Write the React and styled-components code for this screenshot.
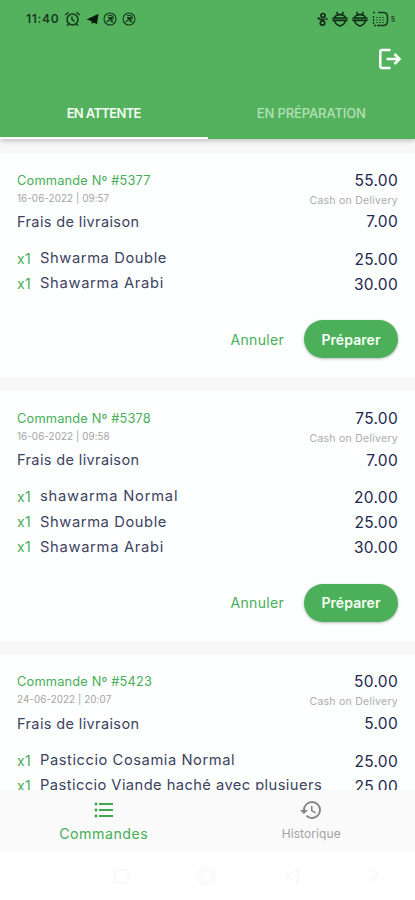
import React, { useState } from 'react'
import styled, { createGlobalStyle } from 'styled-components'
import { MdFormatListBulleted, MdHistory } from 'react-icons/md'

const GlobalStyle = createGlobalStyle`
    * {
        box-sizing: border-box;
    }
    body {
        margin: 0;
        font-family: Inter, 'Open Sans', sans-serif;
        background-color: #fff;
    }
    button {
        font-family: inherit;
        border: none;
        background: none;
        padding: 0;
    }
`;
const Container = styled.div`
    width: 415px;
    height: 900px;
    display: flex;
    flex-direction: column;
    overflow: hidden;
    background-color: #f8f8f8;
`;
const Header = styled.header`
    position: relative;
    height: 139px;
    flex: none;
    display: flex;
    flex-direction: column;
    background-color: #54b25f;
    box-shadow: 0 2px 5px rgba(0, 0, 0, 0.22);
`;
const StatusBar = styled.div`
    height: 38px;
    padding: 0 20px 0 26px;
    display: flex;
    align-items: center;
    justify-content: space-between;
    color: #17391d;
`;
const StatusGroup = styled.div`
    display: flex;
    align-items: center;
    gap: ${props => props.$gap};
`;
const Time = styled.span`
    font-size: 12px;
    font-weight: 600;
    line-height: 16px;
    letter-spacing: 0.7px;
`;
const TopBar = styled.div`
    height: 42px;
    padding: 0 13px;
    display: flex;
    align-items: center;
    justify-content: flex-end;
    color: #fff;
`;
const Tabs = styled.div`
    flex: 1;
    display: flex;
`;
const Tab = styled.button`
    flex: 1;
    padding-top: 8px;
    font-size: 13px;
    font-weight: ${props => (props.$active ? 600 : 500)};
    letter-spacing: ${props => (props.$active ? '-0.65px' : '-0.12px')};
    color: ${props => (props.$active ? '#f2fbf2' : '#b4e0b5')};
    border-bottom: 2px solid ${props => (props.$active ? '#fff' : 'transparent')};
`;
const Orders = styled.main`
    flex: 1;
    min-height: 0;
    overflow: hidden;
    padding-top: 14px;
    display: flex;
    flex-direction: column;
    gap: 14px;
`;
const Card = styled.section`
    flex: none;
    padding: 17px 17px 19px;
    background-color: #fdfefe;
`;
const Row = styled.div`
    display: flex;
    justify-content: space-between;
    align-items: center;
    height: ${props => props.$height};
`;
const OrderNumber = styled.span`
    font-size: 12.8px;
    letter-spacing: 0.18px;
    color: #48ae58;
`;
const OrderDate = styled.span`
    font-size: 9.8px;
    letter-spacing: 0.1px;
    position: relative;
    top: -2px;
    color: #a4a4a4;
`;
const Payment = styled.span`
    font-size: 10.5px;
    letter-spacing: 0.26px;
    color: #acacac;
`;
const Label = styled.span`
    font-size: 14.5px;
    line-height: 20px;
    letter-spacing: 0.38px;
    color: #3c4360;
`;
const Price = styled.span`
    font-size: 15.5px;
    letter-spacing: 0.3px;
    position: relative;
    top: ${props => props.$top || '0px'};
    color: #20284f;
`;
const Items = styled.div`
    padding-top: 12px;
`;
const Item = styled.div`
    display: flex;
    align-items: center;
    height: 25.2px;
    white-space: nowrap;
`;
const Quantity = styled.span`
    width: 23px;
    font-size: 14px;
    letter-spacing: 0.3px;
    color: #48ae58;
`;
const ItemName = styled(Label)`
    flex: 1;
    font-size: 14.7px;
    letter-spacing: ${props => props.$spacing};
`;
const Actions = styled.div`
    margin-top: 24.5px;
    display: flex;
    justify-content: flex-end;
    align-items: center;
    gap: 20px;
`;
const CancelButton = styled.button`
    font-size: 14px;
    letter-spacing: 0.3px;
    color: #48ae58;
`;
const PrepareButton = styled.button`
    width: 94px;
    height: 38px;
    border-radius: 19px;
    background-color: #4caf5a;
    color: #f7fff7;
    font-size: 14px;
    font-weight: 600;
    letter-spacing: 0.08px;
    box-shadow: 0 1px 3px rgba(0, 0, 0, 0.28);
`;
const BottomNav = styled.nav`
    position: relative;
    flex: none;
    height: 62px;
    display: flex;
    background-color: #fafafa;
    box-shadow: 0 -1px 2px rgba(0, 0, 0, 0.02);
`;
const NavItem = styled.button`
    flex: 1;
    display: flex;
    flex-direction: column;
    align-items: center;
    padding-top: 8px;
    gap: 2px;
    font-size: ${props => (props.$active ? '14.2px' : '12px')};
    line-height: 20px;
    letter-spacing: ${props => (props.$active ? '0.5px' : '0.1px')};
    color: ${props => (props.$active ? '#48ae58' : '#a3a3a3')};

    svg {
        color: ${props => (props.$active ? '#3fa94f' : '#858585')};
    }
`;
const SystemNav = styled.div`
    flex: none;
    height: 48px;
    padding-left: 111px;
    display: flex;
    align-items: center;
    gap: 65px;
    background-color: #fff;
    color: #f8f8f8;
`;

const AlarmIcon = () => (
    <svg width="17" height="16" viewBox="0 0 17 16" fill="none" stroke="currentColor" strokeWidth="1.5">
        <circle cx="8.5" cy="8.5" r="5.5" />
        <path d="M8 5.5v3.2l2.5 1.6M1.2 4l3.3-2.8M15.8 4l-3.3-2.8M4.5 13l-1.3 1.7M12.5 13l1.3 1.7" />
    </svg>
)

const PlaneIcon = () => (
    <svg width="13" height="12" viewBox="0 0 13 12" fill="#081c0c">
        <path d="M.5 6.5 12.5.8 11 11.2 7.7 9.5 5.8 11 5.4 8z" />
    </svg>
)

const CircleAppIcon = () => (
    <svg width="14" height="14" viewBox="0 0 14 14" fill="none" stroke="currentColor" strokeWidth="1.1">
        <circle cx="7" cy="7" r="6" />
        <path d="M3.5 10 8 6.5l-3-.5M5 3.8c3-1.5 5.5.2 5.5 3M7 9l3.5 1" />
        <path d="M6 5.5h3v3z" fill="currentColor" />
    </svg>
)

const LinkIcon = () => (
    <svg width="11" height="15" viewBox="0 0 11 15" fill="none" stroke="#102b16" strokeWidth="1.7">
        <circle cx="6" cy="3.5" r="2" />
        <circle cx="5.5" cy="11" r="2.2" />
        <path d="m.7 5.7 3 2 4-.2M8.5 6.5l2 1" />
    </svg>
)

const BugIcon = () => (
    <svg width="18" height="16" viewBox="0 0 18 16" fill="none" stroke="#102b16" strokeWidth="1.5">
        <path d="M3.5 7C4 2.5 14 2.5 14.5 7M5.5 1 7 3.5h4L12.5 1M1.5 7h15M1.5 9.5h15M3.5 10c1 3 3.5 4.3 5.5 5 2-.7 4.5-2 5.5-5" />
        <path d="M.8 8.2h16.4" strokeWidth="1" opacity=".6" />
    </svg>
)

const BatteryIcon = () => (
    <svg width="17" height="16" viewBox="0 0 17 16" fill="none" stroke="#183b1e">
        <path d="M6 1.5h5c3 0 4.5 1.5 4.5 4.5v4c0 3-1.5 4.5-4.5 4.5H6" strokeWidth="1.5" />
        <path d="M1 1.5h3M1.5 5v8M2 14.5h4" strokeWidth="1.3" strokeDasharray="2 1" />
        <path d="M4 6.5h8M4 9h8M4 11.5h8" strokeWidth="1" strokeDasharray="2 1" opacity=".7" />
    </svg>
)

const BoltIcon = () => (
    <svg width="4" height="6" viewBox="0 0 4 6" fill="none" stroke="#285a30" strokeWidth="1.2">
        <path d="M3.5.7H1v2h2v2.5H.5" />
    </svg>
)

const LogoutIcon = () => (
    <svg width="24" height="22" viewBox="0 0 24 22" fill="none" stroke="currentColor" strokeWidth="2.5">
        <path d="M12.5 2H4Q2.3 2 2.3 4v14q0 2 1.7 2h8.5M8.5 11h13M16.5 6l5 5-5 5" />
    </svg>
)

const SystemIcon = ({ children, width = 20 }) => (
    <svg width={width} height="20" viewBox={`0 0 ${width} 20`} fill="none" stroke="currentColor" strokeWidth="1.5">
        {children}
    </svg>
)

const orders = [
    {
        number: '5377',
        date: '16-06-2022 | 09:57',
        total: '55.00',
        delivery: '7.00',
        items: [
            { name: 'Shwarma Double', price: '25.00', spacing: '0.6px' },
            { name: 'Shawarma Arabi', price: '30.00', spacing: '0.7px' },
        ],
    },
    {
        number: '5378',
        date: '16-06-2022 | 09:58',
        total: '75.00',
        delivery: '7.00',
        items: [
            { name: 'shawarma Normal', price: '20.00', spacing: '0.8px' },
            { name: 'Shwarma Double', price: '25.00', spacing: '0.6px' },
            { name: 'Shawarma Arabi', price: '30.00', spacing: '0.7px' },
        ],
    },
    {
        number: '5423',
        date: '24-06-2022 | 20:07',
        total: '50.00',
        delivery: '5.00',
        items: [
            { name: 'Pasticcio Cosamia Normal', price: '25.00', spacing: '0.56px' },
            { name: 'Pasticcio Viande haché avec plusiuers', price: '25.00', spacing: '0.43px' },
        ],
    },
]

const Order = ({ order }) => (
    <Card>
        <Row $height="20px">
            <OrderNumber>Commande Nº #{order.number}</OrderNumber>
            <Price>{order.total}</Price>
        </Row>
        <Row $height="20px">
            <OrderDate>{order.date}</OrderDate>
            <Payment>Cash on Delivery</Payment>
        </Row>
        <Row $height="23.5px">
            <Label>Frais de livraison</Label>
            <Price>{order.delivery}</Price>
        </Row>
        <Items>
            {order.items.map((item) => (
                <Item key={item.name}>
                    <Quantity>x1</Quantity>
                    <ItemName $spacing={item.spacing}>{item.name}</ItemName>
                    <Price $top="1px">{item.price}</Price>
                </Item>
            ))}
        </Items>
        <Actions>
            <CancelButton>Annuler</CancelButton>
            <PrepareButton>Préparer</PrepareButton>
        </Actions>
    </Card>
)

const App = () => {

    const [tab, setTab] = useState('pending')

    return (
        <Container>
            <GlobalStyle />
            <Header>
                <StatusBar>
                    <StatusGroup $gap="4.7px">
                        <Time>11:40</Time>
                        <AlarmIcon />
                        <PlaneIcon />
                        <CircleAppIcon />
                        <CircleAppIcon />
                    </StatusGroup>
                    <StatusGroup $gap="2.5px">
                        <LinkIcon />
                        <BugIcon />
                        <BugIcon />
                        <BatteryIcon />
                        <BoltIcon />
                    </StatusGroup>
                </StatusBar>
                <TopBar>
                    <LogoutIcon />
                </TopBar>
                <Tabs>
                    <Tab $active={tab === 'pending'} onClick={() => setTab('pending')}>EN ATTENTE</Tab>
                    <Tab $active={tab === 'preparing'} onClick={() => setTab('preparing')}>EN PRÉPARATION</Tab>
                </Tabs>
            </Header>
            <Orders>
                {orders.map((order) => (
                    <Order key={order.number} order={order} />
                ))}
            </Orders>
            <BottomNav>
                <NavItem $active>
                    <MdFormatListBulleted size={24} />
                    Commandes
                </NavItem>
                <NavItem>
                    <MdHistory size={24} />
                    Historique
                </NavItem>
            </BottomNav>
            <SystemNav>
                <SystemIcon><rect x="4" y="4" width="13" height="13" /></SystemIcon>
                <SystemIcon width={22}><circle cx="11" cy="10" r="9" /><circle cx="11" cy="10" r="6" /></SystemIcon>
                <SystemIcon><path d="M15 4v13L3 10.5z" /></SystemIcon>
                <SystemIcon width={10}><path d="M1 5q8-3 8 3-1 4-5 4M5 14v3" /></SystemIcon>
            </SystemNav>
        </Container>
    )
}

export default App
